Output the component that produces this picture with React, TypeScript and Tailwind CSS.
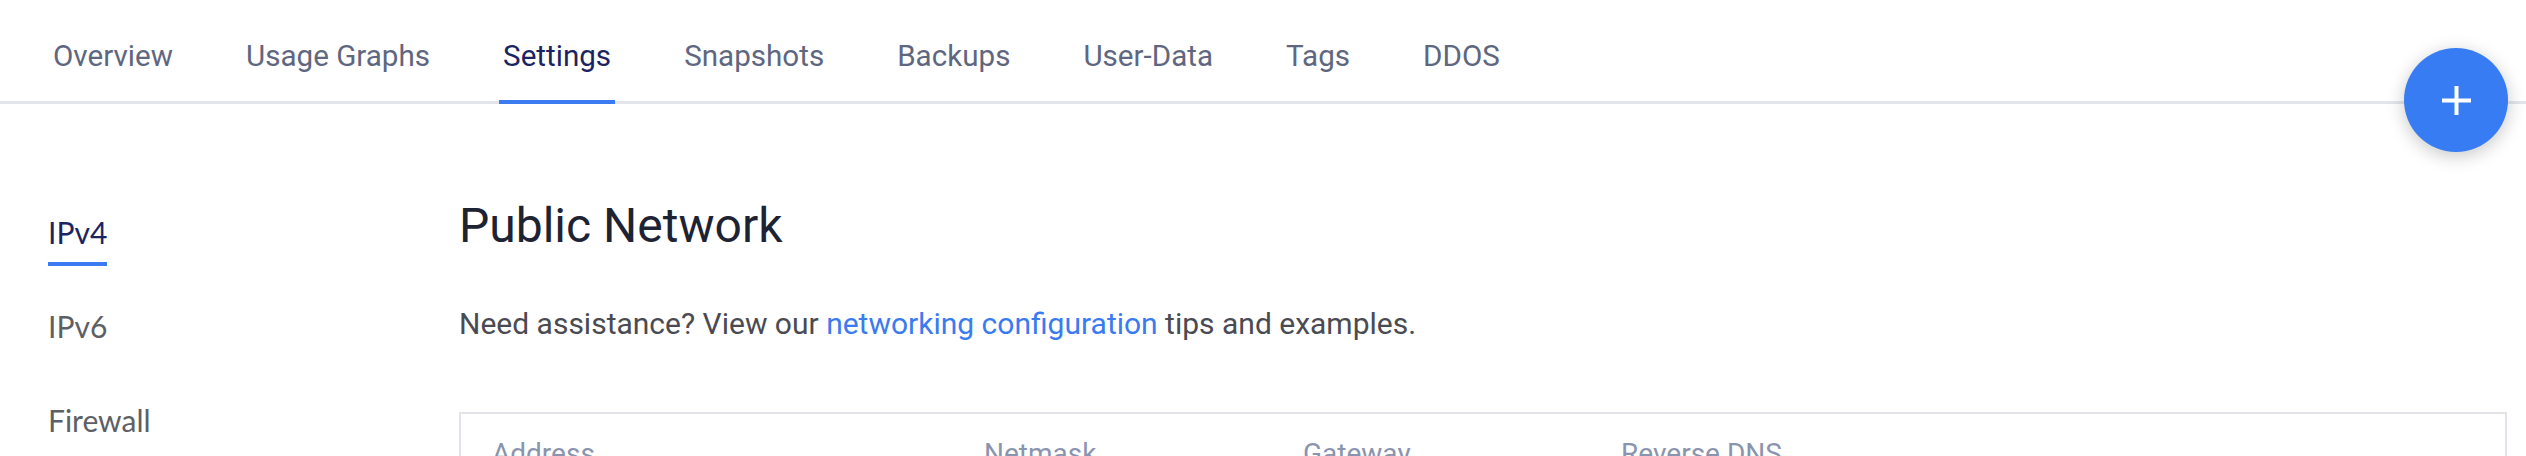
const tabs = ['Overview', 'Usage Graphs', 'Settings', 'Snapshots', 'Backups', 'User-Data', 'Tags', 'DDOS'];
const sideItems = ['IPv4', 'IPv6', 'Firewall'];
const columns = ['Address', 'Netmask', 'Gateway', 'Reverse DNS'];

export default function App() {
  const activeTab = 'Settings';
  const activeSide = 'IPv4';

  return (
    <div className="relative min-h-screen bg-white overflow-hidden" style={{ fontFamily: 'Roboto, "Liberation Sans", sans-serif' }}>
      {/* Top tabs */}
      <nav className="flex gap-[65px] pl-[49px] pt-[40px] border-b-[3px] border-[#e4e5eb]">
        {tabs.map((tab) => (
          <a
            key={tab}
            className={`px-[4px] pb-[28px] -mb-[3px] border-b-4 text-[29.6px] leading-[32px] whitespace-nowrap ${
              tab === activeTab ? 'border-[#3a7bf2] text-[#1b2462]' : 'border-transparent text-[#5f6780]'
            }`}
          >
            {tab}
          </a>
        ))}
      </nav>

      {/* Floating add button */}
      <button className="absolute top-[48px] right-[18px] w-[104px] h-[104px] rounded-full bg-[#377cf3] flex items-center justify-center shadow-[0_4px_18px_rgba(0,0,0,0.22)]">
        <svg width="29" height="29" viewBox="0 0 29 29" fill="none">
          <path d="M14.5 0v29M0 14.5h29" stroke="white" strokeWidth="4" />
        </svg>
      </button>

      <div className="flex">
        {/* Side menu */}
        <aside className="w-[459px] shrink-0 pl-[48px] pt-[110px] flex flex-col items-start gap-[42px]" style={{ fontFamily: 'Lato, "Liberation Sans", sans-serif' }}>
          {sideItems.map((item) => (
            <a
              key={item}
              className={`pb-[12px] border-b-4 text-[30px] leading-[36px] ${
                item === activeSide ? 'border-[#3a7bf2] text-[#1b2462]' : 'border-transparent text-[#5d5f65]'
              }`}
            >
              {item}
            </a>
          ))}
        </aside>

        {/* Main content */}
        <main className="flex-1 pt-[94px] pr-[19px]">
          <h2 className="text-[48px] leading-[56px] text-[#1d2333]">Public Network</h2>
          <p className="mt-[52px] text-[30px] leading-[36px] text-[#4a4b52]">
            Need assistance? View our <a className="text-[#3a7bf2]">networking configuration</a> tips and examples.
          </p>

          <div className="mt-[70px] border-2 border-[#e3e4ea]">
            <div className="grid grid-cols-[492px_319px_318px_1fr] pl-[31px] pt-[24px] pb-[24px] text-[28px] leading-[32px] text-[#8b94ae]">
              {columns.map((col) => (
                <div key={col}>{col}</div>
              ))}
            </div>
          </div>
        </main>
      </div>
    </div>
  );
}
